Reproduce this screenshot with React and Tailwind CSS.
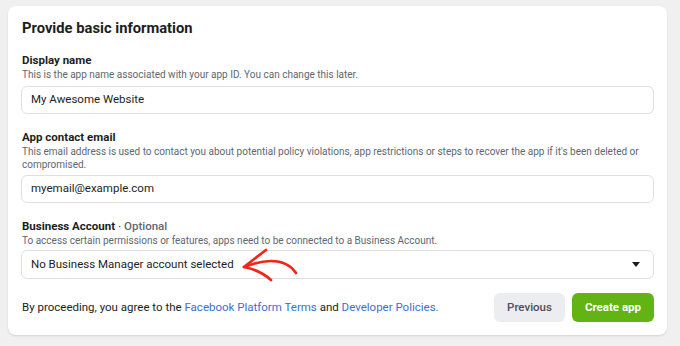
import React from "react";

function Arrow() {
  return (
    <svg className="absolute left-[217px] top-[-5px]" width="85" height="40" viewBox="0 0 85 40" fill="none">
      <path d="M5 21 C 20 15, 45 9, 57 27" stroke="#f0261a" strokeWidth="2.7" strokeLinecap="round" fill="none" />
      <path d="M27 4 Q 15 13 5 21 Q 21 24 32 34" stroke="#f0261a" strokeWidth="2.7" strokeLinecap="round" strokeLinejoin="round" fill="none" />
    </svg>
  );
}

export default function App() {
  return (
    <div className="w-[680px] h-[346px] bg-[#f0f0f0] pt-[6px] pl-[8px]" style={{ fontFamily: "Roboto, 'Liberation Sans', sans-serif" }}>
      <div className="w-[659px] h-[329px] bg-white rounded-[8px] shadow-[0_1px_2px_rgba(0,0,0,0.12)] px-[13px] pt-[13px]">
        <h1 className="text-[14.75px] font-bold text-[#1c1e21] leading-[18px] pl-[1px]">Provide basic information</h1>

        <div className="mt-[16px]">
          <div className="text-[11.5px] font-bold text-[#1c1e21] leading-[15px] pl-[1px]">Display name</div>
          <div className="text-[10px] text-[#606770] leading-[13px] pl-[1px]">This is the app name associated with your app ID. You can change this later.</div>
          <div className="mt-[5px] h-[28px] border border-[#dddfe2] rounded-[6px] flex items-center px-[9px] text-[11.5px] text-[#1c1e21]">My Awesome Website</div>
        </div>

        <div className="mt-[16px]">
          <div className="text-[11.5px] font-bold text-[#1c1e21] leading-[15px] pl-[1px]">App contact email</div>
          <div className="text-[10px] text-[#606770] leading-[13px] pl-[1px]">This email address is used to contact you about potential policy violations, app restrictions or steps to recover the app if it's been deleted or compromised.</div>
          <div className="mt-[4px] h-[28px] border border-[#dddfe2] rounded-[6px] flex items-center px-[9px] text-[11.5px] text-[#1c1e21]">myemail@example.com</div>
        </div>

        <div className="mt-[16px]">
          <div className="text-[11.5px] font-bold text-[#1c1e21] leading-[15px] pl-[1px]">Business Account <span className="font-medium text-[#606770]">· Optional</span></div>
          <div className="text-[10px] text-[#606770] leading-[13px] pl-[1px]">To access certain permissions or features, apps need to be connected to a Business Account.</div>
          <div className="relative mt-[3px] h-[29px] border border-[#dddfe2] rounded-[6px] flex items-center justify-between px-[9px] text-[11.5px] text-[#1c1e21]">
            <span>No Business Manager account selected</span>
            <span className="w-0 h-0 border-l-[4px] border-r-[4px] border-t-[5px] border-l-transparent border-r-transparent border-t-[#1c1e21] mr-[4px]"></span>
            <Arrow />
          </div>
        </div>

        <div className="mt-[14px] flex items-center justify-between">
          <div className="text-[11.5px] text-[#1c1e21] pl-[1px]">
            By proceeding, you agree to the <span className="text-[#3b6fd4]">Facebook Platform Terms</span> and <span className="text-[#3b6fd4]">Developer Policies.</span>
          </div>
          <div className="flex gap-[7px]">
            <button className="h-[29px] w-[71px] rounded-[6px] bg-[#ebedf0] text-[11.5px] font-medium text-[#4b4f56]">Previous</button>
            <button className="h-[29px] w-[82px] rounded-[6px] bg-[#62b414] text-[11.5px] font-bold text-white">Create app</button>
          </div>
        </div>
      </div>
    </div>
  );
}
